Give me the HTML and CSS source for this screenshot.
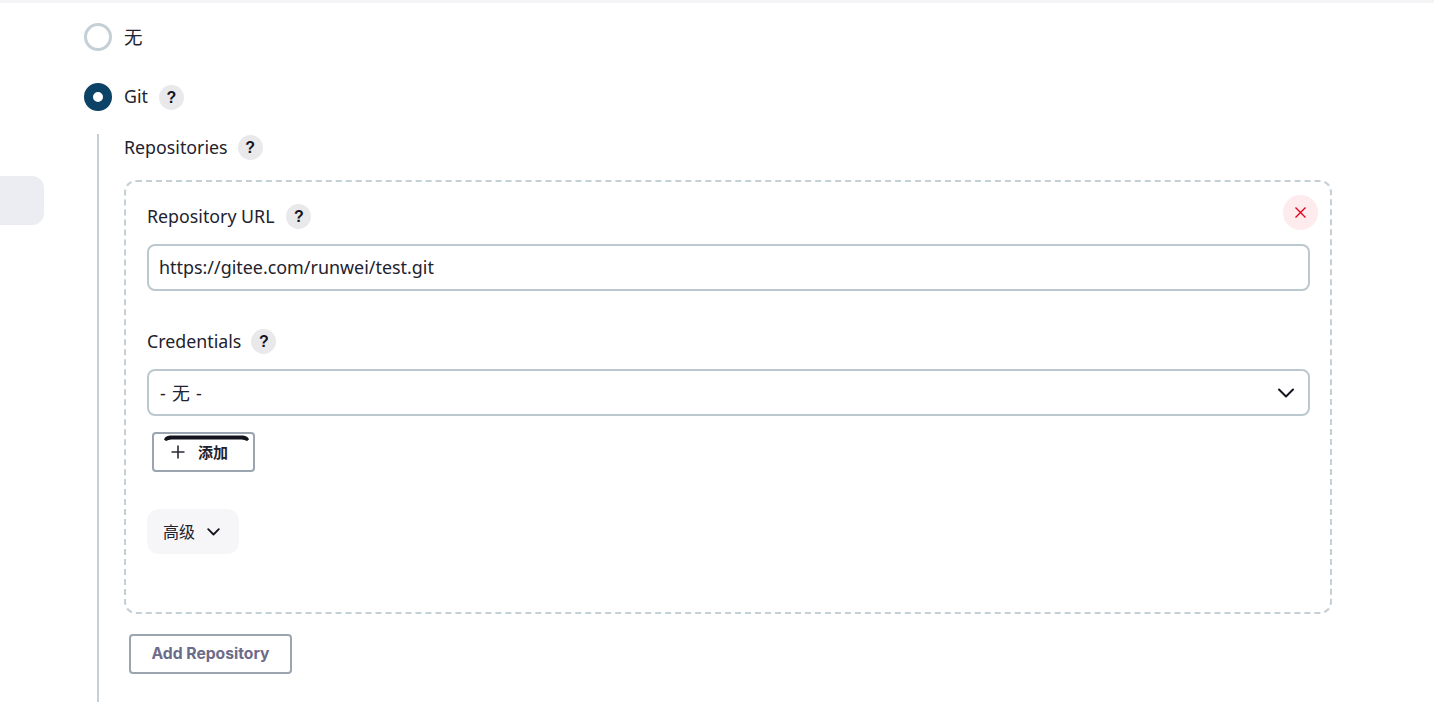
FILE: index.html
```html
<!DOCTYPE html>
<html lang="zh-CN">
<head>
  <meta charset="UTF-8" />
  <meta name="viewport" content="width=device-width, initial-scale=1.0"/>
  <title>Source Code Management</title>
  <link rel="stylesheet" href="styles.css">
</head>
<body>
  <div class="topbar"></div>

  <div class="page">
    <aside class="side">
      <div class="side-tab"></div>
    </aside>

    <main class="main">
      <div class="radio-row first">
        <span class="radio"></span>
        <span class="radio-label cjk">无</span>
      </div>

      <div class="radio-row second">
        <span class="radio checked"></span>
        <span class="radio-label">Git</span>
        <span class="help">?</span>
      </div>

      <section class="nested">
        <div class="label-row repos-label">
          <span>Repositories</span>
          <span class="help">?</span>
        </div>

        <div class="repo-card">
          <button class="remove" type="button" aria-label="Remove">
            <svg width="14" height="14" viewBox="0 0 14 14"><path d="M1.5 1.5l10 10M11.5 1.5l-10 10" fill="none" stroke="#e6001f" stroke-width="1.4"/></svg>
          </button>

          <div class="label-row url-label">
            <span>Repository URL</span>
            <span class="help">?</span>
          </div>
          <input class="field" type="text" value="https://gitee.com/runwei/test.git">

          <div class="label-row cred-label">
            <span>Credentials</span>
            <span class="help">?</span>
          </div>
          <div class="field select">
            <span class="select-value">- 无 -</span>
            <svg width="18" height="10" viewBox="0 0 18 10"><path d="M2 1.5l7 7 7-7" fill="none" stroke="#14141f" stroke-width="2" stroke-linecap="round" stroke-linejoin="round"/></svg>
          </div>

          <button class="add-btn" type="button">
            <svg class="add-arc" width="85" height="7" viewBox="0 0 85 7"><path d="M0 4.5Q1 1 6 .5H79Q84 1 85 4.5L83 6Q80 4 76 4.5H9Q5 4 2 6Z" fill="#14141f"/></svg>
            <svg class="add-plus" width="14" height="14" viewBox="0 0 14 14"><path d="M7 0.5v13M0.5 7h13" fill="none" stroke="#2b2b38" stroke-width="1.6"/></svg>
            <span>添加</span>
          </button>

          <button class="advanced" type="button">
            <span>高级</span>
            <svg width="13" height="8" viewBox="0 0 13 8"><path d="M1.2 1.2l5.3 5.3 5.3-5.3" fill="none" stroke="#14141f" stroke-width="1.8" stroke-linecap="round" stroke-linejoin="round"/></svg>
          </button>
        </div>

        <button class="add-repo" type="button">Add Repository</button>
      </section>
    </main>
  </div>
</body>
</html>
```

FILE: styles.css
```css
* {
  box-sizing: border-box;
}

html, body {
  height: 100%;
}

body {
  margin: 0;
  background-color: #fff;
  color: #22222e;
  font-family: 'Noto Sans', 'Noto Sans CJK SC', sans-serif;
  font-size: 17.8px;
  overflow: hidden;
}

button {
  font-family: inherit;
  cursor: pointer;
}

.topbar {
  height: 3px;
  background-color: #f4f4f7;
}

.page {
  display: flex;
}

.side {
  width: 84px;
  flex: none;
}

.side-tab {
  width: 44px;
  height: 49px;
  margin-top: 173px;
  background-color: #ecedf2;
  border-radius: 0 12px 12px 0;
}

.main {
  flex: 1;
}

.radio-row {
  display: flex;
  align-items: center;
  height: 28px;
}

.radio-row.first {
  margin-top: 20px;
}

.radio-row.second {
  margin-top: 32px;
}

.radio {
  width: 28px;
  height: 28px;
  border-radius: 50%;
  border: 3px solid #c5d0d6;
  margin-right: 12px;
  flex: none;
}

.radio.checked {
  border: 9.5px solid #0b4266;
  background-color: #fff;
}

.radio-label {
  line-height: 26px;
  margin-bottom: 2px;
}

.radio-label.cjk {
  font-size: 18.5px;
  margin-bottom: 0;
}

.help {
  width: 25px;
  height: 25px;
  border-radius: 50%;
  background-color: #e9e9eb;
  color: #14141f;
  font-family: 'Liberation Sans', sans-serif;
  font-size: 16px;
  font-weight: bold;
  line-height: 25px;
  text-align: center;
  margin-left: 10px;
  flex: none;
}

.radio-row .help {
  margin-left: 11px;
}

.nested {
  margin: 23px 0 0 13px;
  padding: 0 0 0 25px;
  width: 1235px;
  height: 568px;
  border-left: 2px solid #c5d0d6;
}

.label-row {
  display: flex;
  align-items: center;
  height: 26px;
}

.repos-label {
  margin-bottom: 20px;
}

.url-label .help {
  margin-left: 12px;
}

.repo-card {
  position: relative;
  width: 1208px;
  height: 434px;
  padding: 21px 21px 0 21px;
  border: 2px dashed #c5d0d6;
  border-radius: 12px;
}

.remove {
  position: absolute;
  top: 13px;
  right: 12px;
  width: 35px;
  height: 35px;
  padding: 0;
  border: none;
  border-radius: 50%;
  background-color: #fdebed;
  display: flex;
  align-items: center;
  justify-content: center;
}

.field {
  display: block;
  width: 1163px;
  height: 47px;
  margin-top: 15px;
  padding: 0 10px 2px;
  border: 2px solid #bcc8cf;
  border-radius: 8px;
  background-color: #fff;
  color: #22222e;
  font-family: inherit;
  font-size: 17.9px;
}

.cred-label {
  margin-top: 37px;
}

.select {
  display: flex;
  align-items: center;
  justify-content: space-between;
  margin-top: 15px;
  padding: 0 13px 0 11px;
}

.select-value {
  word-spacing: 1.5px;
  margin-bottom: 1px;
}

.add-btn {
  position: relative;
  display: flex;
  align-items: center;
  gap: 13px;
  width: 103px;
  height: 40px;
  margin: 16px 0 0 5px;
  padding: 0 0 2px 17px;
  border: 2px solid #9aa5b0;
  border-radius: 4px;
  background-color: #fff;
  color: #22222e;
  font-size: 15px;
  font-weight: 700;
}

.add-plus {
  margin-top: 2px;
}

.add-arc {
  position: absolute;
  top: 1px;
  left: 10px;
}

.advanced {
  display: flex;
  align-items: center;
  gap: 12px;
  height: 45px;
  width: 92px;
  margin-top: 37px;
  padding: 0 0 2px 16px;
  border: none;
  border-radius: 12px;
  background-color: #f6f6f8;
  color: #22222e;
  font-size: 16px;
}

.advanced svg {
  margin-top: 2px;
}

.add-repo {
  display: block;
  width: 163px;
  height: 40px;
  margin: 20px 0 0 5px;
  padding: 0 0 1px;
  border: 2px solid #9aa5b0;
  border-radius: 4px;
  background-color: #fff;
  color: #6d6b8a;
  font-family: 'Inter', sans-serif;
  font-size: 15.7px;
  font-weight: 700;
}
```
